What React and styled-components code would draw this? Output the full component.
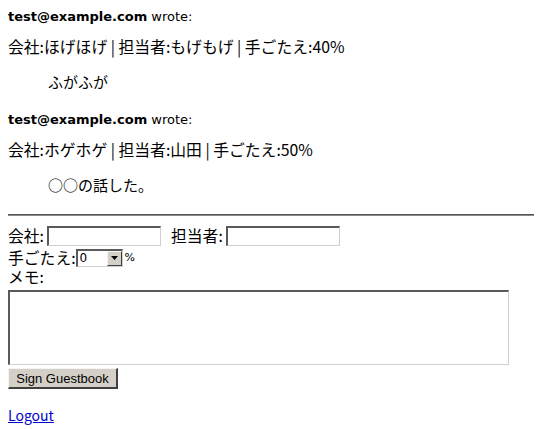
import React from "react";
import styled, { createGlobalStyle } from "styled-components";

const Global = createGlobalStyle`
  html { margin: 0; padding: 0; background: #fff; overflow: hidden; }
  body {
    margin: 8px;
    padding: 0;
    color: #000;
    font-family: "Noto Sans CJK JP", "DejaVu Sans", sans-serif;
    font-size: 16px;
  }
`;

const Page = styled.div`
  display: flex;
  flex-direction: column;
`;

const Entry = styled.div`
  display: flex;
  flex-direction: column;
  margin-bottom: 19px;
`;

const Author = styled.div`
  font-family: "DejaVu Sans", Verdana, sans-serif;
  font-size: 13px;
  line-height: 17px;
  height: 17px;
  margin-bottom: 12px;
  b { font-weight: bold; }
`;

const Meta = styled.div`
  font-size: 15.8px;
  line-height: 19px;
  height: 19px;
  margin-bottom: 16px;
  white-space: nowrap;
`;

const Quote = styled.blockquote`
  margin: 0 0 0 40px;
  font-size: 15px;
  line-height: 20px;
  height: 20px;
`;

const Rule = styled.div`
  align-self: flex-start;
  width: calc(100vw - 8px);
  height: 0;
  margin: 0 0 8px 0;
  border-top: 1px solid #555;
  border-bottom: 1px solid #8a8a8a;
`;

const Form = styled.form`
  display: flex;
  flex-direction: column;
  align-items: flex-start;
`;

const Row = styled.div`
  display: flex;
  align-items: center;
  height: ${(p) => p.$h}px;
  font-size: 15.8px;
  white-space: nowrap;
`;

const Label = styled.span`
  margin-left: ${(p) => p.$ml || 0}px;
  line-height: 18px;
`;

const TextInput = styled.input`
  box-sizing: border-box;
  width: 114px;
  height: 20px;
  margin: 0 0 0 3px;
  padding: 0 2px;
  background: #fff;
  border-style: solid;
  border-width: 2px 1px 1px 2px;
  border-color: #5a5a5a #d0d0d0 #d0d0d0 #5a5a5a;
  font-family: "DejaVu Sans", sans-serif;
  font-size: 12px;
  outline: none;
`;

const SelectBox = styled.span`
  box-sizing: border-box;
  display: inline-flex;
  width: 47px;
  height: 18px;
  border-style: solid;
  border-width: 2px 1px 1px 2px;
  border-color: #5a5a5a #d0d0d0 #d0d0d0 #5a5a5a;
  background: #fff;
`;

const NativeSelect = styled.select`
  appearance: none;
  -webkit-appearance: none;
  flex: 1;
  min-width: 0;
  border: none;
  background: transparent;
  padding: 0 0 0 2px;
  margin: 0;
  font-family: "DejaVu Sans", sans-serif;
  font-size: 12px;
  line-height: 15px;
  color: #000;
  outline: none;
`;

const ArrowBtn = styled.span`
  box-sizing: border-box;
  width: 15px;
  height: 100%;
  display: flex;
  align-items: center;
  justify-content: center;
  background: #d4d0c8;
  border-style: solid;
  border-width: 1px;
  border-color: #f4f4f4 #404040 #404040 #f4f4f4;
`;

const Percent = styled.span`
  margin-left: 2px;
  font-family: "DejaVu Sans", sans-serif;
  font-size: 11px;
  letter-spacing: -1px;
`;

const MemoLabel = styled.div`
  height: 20px;
  line-height: 18px;
  font-size: 15.8px;
`;

const Memo = styled.textarea`
  box-sizing: border-box;
  width: 501px;
  height: 75px;
  margin: 2px 0 0 0;
  padding: 2px;
  resize: none;
  background: #fff;
  border-style: solid;
  border-width: 2px 1px 1px 2px;
  border-color: #5a5a5a #d0d0d0 #d0d0d0 #5a5a5a;
  outline: none;
`;

const Button = styled.button`
  box-sizing: border-box;
  width: 110px;
  height: 21px;
  margin-top: 3px;
  padding: 0;
  background: #d4d0c8;
  border-style: solid;
  border-width: 1px 2px 2px 1px;
  border-color: #f4f4f4 #404040 #404040 #f4f4f4;
  font-family: "Liberation Sans", Arial, sans-serif;
  font-size: 13px;
  line-height: 17px;
  color: #000;
`;

const LinkLine = styled.p`
  margin: 16px 0 0 0;
  line-height: 20px;
  font-size: 14px;
`;

const Link = styled.a`
  color: #0000cc;
  text-decoration: underline;
`;

const entries = [
  { author: "test@example.com", meta: "会社:ほげほげ | 担当者:もげもげ | 手ごたえ:40%", body: "ふがふが" },
  { author: "test@example.com", meta: "会社:ホゲホゲ | 担当者:山田 | 手ごたえ:50%", body: "○○の話した。" },
];

const Triangle = () => (
  <svg width="7" height="4" viewBox="0 0 7 4">
    <path d="M0 0H7L3.5 4Z" fill="#000" />
  </svg>
);

export default function App() {
  return (
    <Page>
      <Global />
      {entries.map((e, i) => (
        <Entry key={i}>
          <Author>
            <b>{e.author}</b> wrote:
          </Author>
          <Meta>{e.meta}</Meta>
          <Quote>{e.body}</Quote>
        </Entry>
      ))}
      <Rule />
      <Form onSubmit={(ev) => ev.preventDefault()}>
        <Row $h={23}>
          <Label>会社:</Label>
          <TextInput type="text" />
          <Label $ml={10}>担当者:</Label>
          <TextInput type="text" />
        </Row>
        <Row $h={21}>
          <Label>手ごたえ:</Label>
          <SelectBox>
            <NativeSelect defaultValue="0">
              {[0, 10, 20, 30, 40, 50, 60, 70, 80, 90, 100].map((v) => (
                <option key={v} value={v}>{v}</option>
              ))}
            </NativeSelect>
            <ArrowBtn>
              <Triangle />
            </ArrowBtn>
          </SelectBox>
          <Percent>%</Percent>
        </Row>
        <MemoLabel>メモ:</MemoLabel>
        <Memo />
        <Button type="submit">Sign Guestbook</Button>
      </Form>
      <LinkLine>
        <Link href="#">Logout</Link>
      </LinkLine>
    </Page>
  );
}
